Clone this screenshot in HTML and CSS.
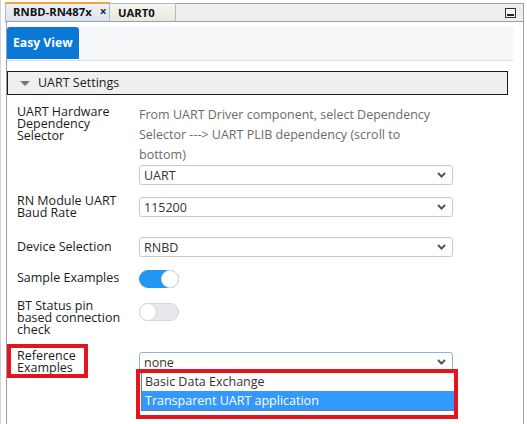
FILE: index.html
```html
<!DOCTYPE html>
<html>
<head>
<meta charset="utf-8">
<link rel="stylesheet" href="styles.css">
</head>
<body>
<div class="app">
  <div class="window">
    <div class="tabstrip">
      <div class="tab tab-active">RNBD-RN487x <span class="close">×</span></div>
      <div class="tab tab-other">UART0</div>
      <div class="strip-fill">
        <svg class="min-icon" width="11" height="10" viewBox="0 0 11 10"><rect x="0.5" y="0.5" width="10" height="9" fill="#f4f4f4" stroke="#333"/><rect x="2" y="6" width="7" height="2" fill="#222"/></svg>
      </div>
    </div>
    <div class="content">
      <div class="viewbar"><div class="viewtab">Easy View</div></div>
      <div class="section-head"><span class="tri"></span>UART Settings</div>

      <div class="row r1">
        <div class="label">UART Hardware Dependency Selector</div>
        <div class="field">
          <div class="desc">From UART Driver component, select Dependency Selector ---&gt; UART PLIB dependency (scroll to bottom)</div>
          <div class="select"><span>UART</span><svg class="chev" width="9" height="6" viewBox="0 0 9 6"><polyline points="1,1 4.5,4.5 8,1" fill="none" stroke="#555" stroke-width="2"/></svg></div>
        </div>
      </div>

      <div class="row r2">
        <div class="label">RN Module UART Baud Rate</div>
        <div class="field f2">
          <div class="select"><span>115200</span><svg class="chev" width="9" height="6" viewBox="0 0 9 6"><polyline points="1,1 4.5,4.5 8,1" fill="none" stroke="#555" stroke-width="2"/></svg></div>
        </div>
      </div>

      <div class="row r3">
        <div class="label l3">Device Selection</div>
        <div class="field">
          <div class="select"><span>RNBD</span><svg class="chev" width="9" height="6" viewBox="0 0 9 6"><polyline points="1,1 4.5,4.5 8,1" fill="none" stroke="#555" stroke-width="2"/></svg></div>
        </div>
      </div>

      <div class="row r4">
        <div class="label l4">Sample Examples</div>
        <div class="field">
          <div class="toggle on"><span class="knob"></span></div>
        </div>
      </div>

      <div class="row r5">
        <div class="label">BT Status pin based connection check</div>
        <div class="field f5">
          <div class="toggle"><span class="knob"></span></div>
        </div>
      </div>

      <div class="row r6">
        <div class="label">Reference Examples</div>
        <div class="field f6">
          <div class="select focused"><span>none</span><svg class="chev" width="9" height="6" viewBox="0 0 9 6"><polyline points="1,1 4.5,4.5 8,1" fill="none" stroke="#555" stroke-width="2"/></svg></div>
          <div class="dropdown">
            <div class="opt">Basic Data Exchange</div>
            <div class="opt opt-sel">Transparent UART application</div>
          </div>
        </div>
      </div>

      <div class="mark mark-label"></div>
      <div class="mark mark-list"></div>
    </div>
  </div>
</div>
</body>
</html>
```
FILE: styles.css
```css
html, body {
  margin: 0;
  padding: 0;
  background: #ffffff;
}
body {
  width: 527px;
  height: 424px;
  overflow: hidden;
  font-family: "Open Sans", "Noto Sans", sans-serif;
  color: #1b1b1b;
}
.app {
  height: 424px;
  border-left: 1px solid #d4d4d4;
  padding-left: 4px;
  box-sizing: border-box;
  padding-top: 2px;
}
.window {
  width: 519px;
  height: 422px;
  display: flex;
  flex-direction: column;
}
.tabstrip {
  display: flex;
  height: 19px;
  border-bottom: 1px solid #8fa3b5;
}
.tab {
  box-sizing: border-box;
  height: 19px;
  font-weight: 700;
  font-size: 11.3px;
  line-height: 16px;
  white-space: nowrap;
  color: #111;
}
.tab-active {
  width: 105px;
  border-top: 2px solid #f0a43a;
  border-left: 1px solid #aebccb;
  border-right: 1px solid #aebccb;
  background: linear-gradient(#eef2f8, #dce3ee);
  padding-left: 7px;
}
.close {
  font-size: 12px;
  margin-left: 5px;
  color: #222;
}
.tab-other {
  width: 66px;
  margin-top: 1px;
  height: 18px;
  border-top: 1px solid #aebccb;
  border-right: 1px solid #aebccb;
  background: linear-gradient(#f7f5ef, #ebe7dc);
  padding-left: 8px;
  line-height: 17px;
}
.strip-fill {
  flex: 1;
  margin-top: 1px;
  height: 18px;
  box-sizing: border-box;
  border-top: 1px solid #8fa3b5;
  border-right: 1px solid #8fa3b5;
  background: #eeeeee;
  display: flex;
  justify-content: flex-end;
  align-items: center;
  padding-right: 7px;
}
.content {
  position: relative;
  flex: 1;
  margin-left: 1px;
  border-left: 1px solid #8fa3b5;
  border-right: 1px solid #8fa3b5;
  padding-top: 5px;
}
.viewbar {
  margin-right: 10px;
  height: 33px;
  background: #f6f7f9;
  border-bottom: 1px solid #dde1e6;
}
.viewtab {
  width: 72px;
  height: 32px;
  background: #0a78d6;
  border-radius: 3px 3px 0 0;
  color: #fff;
  font-weight: 700;
  font-size: 12.2px;
  line-height: 32px;
  box-sizing: border-box;
  padding-left: 6px;
}
.section-head {
  margin-top: 10px;
  margin-right: 15px;
  height: 24px;
  box-sizing: border-box;
  border: 1px solid #1a1a1a;
  background: #efefef;
  font-size: 12.5px;
  line-height: 22px;
  color: #1b1b1b;
  display: flex;
  align-items: center;
}
.tri {
  width: 0;
  height: 0;
  border-left: 5px solid transparent;
  border-right: 5px solid transparent;
  border-top: 5px solid #777;
  margin-left: 12px;
  margin-right: 8px;
}
.row {
  display: flex;
  padding-left: 10px;
}
.label {
  width: 110px;
  margin-right: 12px;
  font-size: 12.5px;
  line-height: 12px;
  color: #1b1b1b;
}
.field {
  width: 314px;
}
.r1 { margin-top: 10px; }
.r1 .label { padding-top: 1px; }
.r2 { margin-top: 9px; }
.r2 .label { padding-top: 1px; }
.f2 { margin-top: 3px; }
.r3 { margin-top: 18px; }
.l3 { padding-top: 4px; }
.r4 { margin-top: 13px; }
.l4 { padding-top: 2px; }
.r5 { margin-top: 12px; }
.f5 { margin-top: 3px; }
.r6 { margin-top: 14px; }
.f6 { margin-top: 2px; }
.desc {
  font-size: 12.5px;
  line-height: 20px;
  color: #6b6b6b;
  padding-right: 10px;
}
.select {
  height: 20px;
  box-sizing: border-box;
  border: 1px solid #c9c9c9;
  border-radius: 3px;
  background: #fff;
  display: flex;
  align-items: center;
  justify-content: space-between;
  padding-left: 4px;
  padding-right: 6px;
  font-size: 12.5px;
  color: #333;
}
.select.focused {
  border-color: #8fb2dd;
}
.chev {
  display: block;
}
.toggle {
  width: 40px;
  height: 18px;
  border-radius: 9px;
  background: #e6e8eb;
  border: 1px solid #d2d4d7;
  box-sizing: border-box;
  position: relative;
  display: flex;
  align-items: center;
}
.toggle .knob {
  width: 18px;
  height: 18px;
  border-radius: 50%;
  background: #fff;
  box-sizing: border-box;
  border: 1px solid #d6d6d6;
  margin-left: -1px;
}
.toggle.on {
  background: #2196f3;
  border-color: #2196f3;
  justify-content: flex-end;
}
.toggle.on .knob {
  margin-left: 0;
  margin-right: -1px;
  border-color: #e2e2e2;
}
.dropdown {
  margin-left: 2px;
  width: 314px;
  border: 1px solid #7a7a7a;
  border-top: none;
  background: #fff;
  box-sizing: border-box;
}
.opt {
  height: 19px;
  font-size: 12.5px;
  line-height: 19px;
  padding-left: 3px;
  color: #333;
}
.opt-sel {
  background: #3399ff;
  color: #fff;
}
.mark {
  position: absolute;
  border: 4px solid #e3151f;
  box-sizing: border-box;
}
.mark-label {
  left: 0px;
  top: 322px;
  width: 81px;
  height: 34px;
}
.mark-list {
  left: 129px;
  top: 347px;
  width: 322px;
  height: 50px;
}
```
